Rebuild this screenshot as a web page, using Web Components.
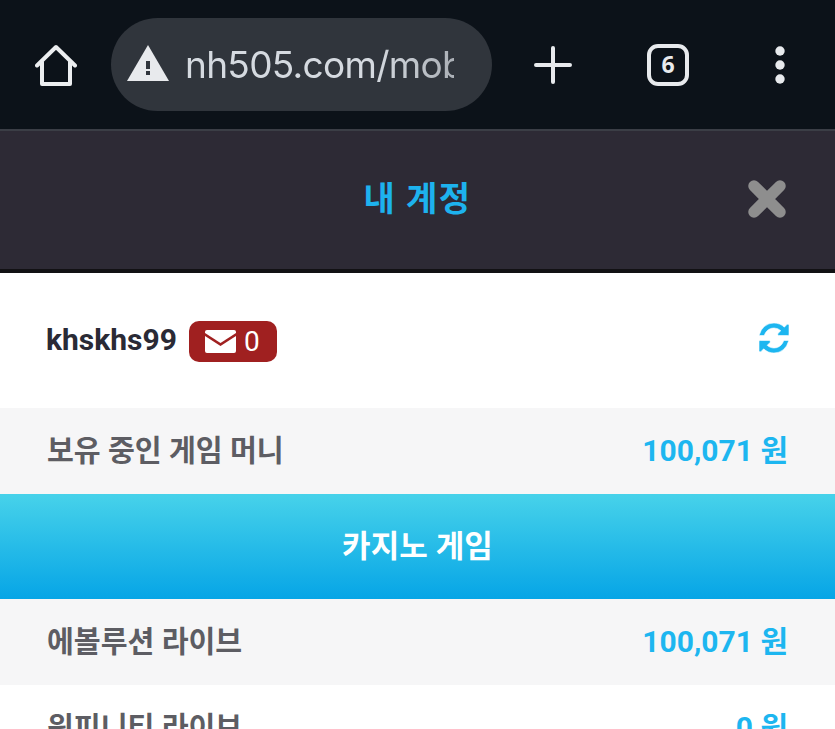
<!DOCTYPE html>
<html lang="ko">
<head>
<meta charset="utf-8">
<title>내 계정</title>
<style>
  html, body { margin: 0; height: 729px; overflow: hidden; background: #fff; }
  body { font-family: Roboto, "Noto Sans CJK KR", sans-serif; }
</style>
</head>
<body>
<browser-bar url="nh505.com/mobile" tabs="6"></browser-bar>
<account-header>내 계정</account-header>
<user-row name="khskhs99" count="0"></user-row>
<money-row label="보유 중인 게임 머니" value="100,071 원"></money-row>
<section-button>카지노 게임</section-button>
<money-row label="에볼루션 라이브" value="100,071 원"></money-row>
<money-row label="윈피니티 라이브" value="0 원" plain></money-row>

<script>
class BrowserBar extends HTMLElement {
  constructor() {
    super();
    this.shadowDOM = this.attachShadow({mode: 'open'});
  }
  connectedCallback() {
    this.shadowDOM.innerHTML = `
      <style>
        :host {
          display: flex;
          align-items: center;
          box-sizing: border-box;
          height: 131px;
          padding-left: 35px;
          background: #0c1219;
          border-bottom: 2px solid #3b3e46;
        }
        svg { display: block; flex: none; }
        .pill {
          display: flex;
          align-items: center;
          box-sizing: border-box;
          width: 381px;
          height: 93px;
          margin-left: 34px;
          padding-left: 16px;
          border-radius: 47px;
          background: #30353c;
        }
        .warn { margin-bottom: 3px; }
        .url {
          width: 269px;
          margin-left: 16px;
          overflow: hidden;
          white-space: nowrap;
          font: 400 37px/44px Inter, "Noto Sans", sans-serif;
          letter-spacing: -0.7px;
          color: #d5dae0;
          -webkit-mask-image: linear-gradient(90deg, #000 70%, rgba(0,0,0,.75));
        }
        .plus { margin-left: 42px; }
        .tabs {
          display: flex;
          align-items: center;
          justify-content: center;
          box-sizing: border-box;
          width: 42px;
          height: 42px;
          margin-left: 75px;
          border: 4px solid #e8eaed;
          border-radius: 11px;
          font: 700 23px/1 "Open Sans", sans-serif;
          color: #e8eaed;
        }
        .more { margin-left: 86px; }
      </style>
      <svg width="42" height="42" viewBox="0 0 42 42" fill="none" stroke="#eceef0" stroke-width="4" stroke-linejoin="round" stroke-linecap="round">
        <path d="M2 21.500 21 3l19 18.500"/>
        <path d="M7 18v22h28V18"/>
      </svg>
      <div class="pill">
        <svg class="warn" width="42" height="36" viewBox="0 0 42 36">
          <path d="M21 0 42 36H0Z" fill="#e8eaed"/>
          <rect x="19" y="16" width="4" height="8" fill="#30353c"/>
          <rect x="19" y="26" width="4" height="4" fill="#30353c"/>
        </svg>
        <div class="url">${this.getAttribute('url')}</div>
      </div>
      <svg class="plus" width="38" height="38" viewBox="0 0 38 38" stroke="#e8eaed" stroke-width="4" stroke-linecap="round">
        <path d="M19 2v34M2 19h34"/>
      </svg>
      <div class="tabs">${this.getAttribute('tabs')}</div>
      <svg class="more" width="10" height="38" viewBox="0 0 10 38" fill="#e8eaed">
        <circle cx="5" cy="5" r="4.700"/>
        <circle cx="5" cy="19" r="4.700"/>
        <circle cx="5" cy="33" r="4.700"/>
      </svg>
    `;
  }
}

class AccountHeader extends HTMLElement {
  constructor() {
    super();
    this.shadowDOM = this.attachShadow({mode: 'open'});
    this.shadowDOM.innerHTML = `
      <style>
        :host {
          display: grid;
          grid-template-columns: 1fr auto 1fr;
          align-items: center;
          box-sizing: border-box;
          height: 142px;
          padding: 0 49px 4px;
          background: #2d2a35;
          border-bottom: 4px solid #121114;
        }
        .title {
          padding-bottom: 4px;
          font-size: 34px;
          font-weight: 700;
          letter-spacing: 1.4px;
          color: #1db2ee;
        }
        svg { justify-self: end; display: block; margin-top: 2px; }
      </style>
      <span></span>
      <div class="title"><slot></slot></div>
      <svg width="38" height="38" viewBox="0 0 38 38" stroke="#8e8e8e" stroke-width="11.500" stroke-linecap="round">
        <path d="M6 6l26 26M32 6 6 32"/>
      </svg>
    `;
  }
}

class UserRow extends HTMLElement {
  constructor() {
    super();
    this.shadowDOM = this.attachShadow({mode: 'open'});
  }
  connectedCallback() {
    this.shadowDOM.innerHTML = `
      <style>
        :host {
          display: flex;
          align-items: center;
          box-sizing: border-box;
          height: 135px;
          padding: 0 46px 2px 46px;
          background: #fff;
        }
        .name {
          font-size: 30px;
          font-weight: 700;
          color: #2a2a35;
        }
        .badge {
          display: flex;
          align-items: center;
          gap: 8px;
          box-sizing: border-box;
          height: 41px;
          margin: 4px 0 0 12px;
          padding: 0 17px 0 16px;
          border-radius: 10px;
          background: #a02020;
          font-size: 28px;
          color: #fff;
        }
        .refresh { margin: 0 0 4px auto; display: block; }
      </style>
      <div class="name">${this.getAttribute('name')}</div>
      <div class="badge">
        <svg width="31" height="23" viewBox="0 0 31 23" fill="#fff">
          <path d="M2 0h27a2 2 0 0 1 2 2v1L15.500 13 0 3V2a2 2 0 0 1 2-2Z"/>
          <path d="M0 6l15.500 10L31 6v15a2 2 0 0 1-2 2H2a2 2 0 0 1-2-2Z"/>
        </svg>
        <span>${this.getAttribute('count')}</span>
      </div>
      <svg class="refresh" width="30" height="30" viewBox="0 0 1536 1536" fill="#1db6f0" stroke="#fff" stroke-width="30">
        <path d="M1511 928q0 5-1 7-64 268-268 434.500t-478 166.500q-146 0-282.500-55t-243.500-157l-129 129q-19 19-45 19t-45-19-19-45v-448q0-26 19-45t45-19h448q26 0 45 19t19 45-19 45l-137 137q71 66 161 102t187 36q134 0 250-65t186-179q11-17 53-117 8-23 30-23h192q13 0 22.500 9.500t9.500 22.500zm25-800v448q0 26-19 45t-45 19h-448q-26 0-45-19t-19-45 19-45l138-138q-148-137-349-137-134 0-250 65t-186 179q-11 17-53 117-8 23-30 23h-199q-13 0-22.500-9.500t-9.500-22.500v-7q65-268 270-434.500t480-166.500q146 0 284 55.500t245 156.500l130-129q19-19 45-19t45 19 19 45z"/>
      </svg>
    `;
  }
}

class MoneyRow extends HTMLElement {
  constructor() {
    super();
    this.shadowDOM = this.attachShadow({mode: 'open'});
  }
  connectedCallback() {
    this.shadowDOM.innerHTML = `
      <style>
        :host {
          display: flex;
          align-items: center;
          justify-content: space-between;
          box-sizing: border-box;
          height: 86px;
          padding: 0 47px 6px;
          background: #f6f6f7;
        }
        :host([plain]) { background: #fff; }
        .label {
          font-size: 29.200px;
          font-weight: 700;
          color: #5d5d63;
        }
        .value {
          font-size: 30px;
          font-weight: 700;
          color: #1db6f0;
        }
      </style>
      <div class="label">${this.getAttribute('label')}</div>
      <div class="value">${this.getAttribute('value')}</div>
    `;
  }
}

class SectionButton extends HTMLElement {
  constructor() {
    super();
    this.shadowDOM = this.attachShadow({mode: 'open'});
    this.shadowDOM.innerHTML = `
      <style>
        :host {
          display: flex;
          align-items: center;
          justify-content: center;
          box-sizing: border-box;
          height: 105px;
          padding-bottom: 7px;
          background: linear-gradient(#47d2ea, #06a5e6);
          font-size: 31px;
          font-weight: 700;
          letter-spacing: 0.1px;
          color: #fff;
        }
      </style>
      <slot></slot>
    `;
  }
}

customElements.define('browser-bar', BrowserBar);
customElements.define('account-header', AccountHeader);
customElements.define('user-row', UserRow);
customElements.define('money-row', MoneyRow);
customElements.define('section-button', SectionButton);
</script>
</body>
</html>
